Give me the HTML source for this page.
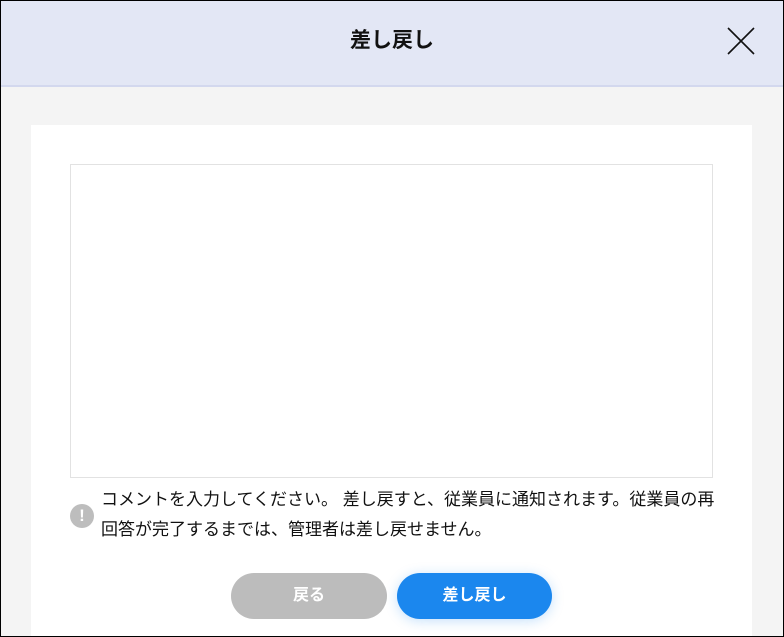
<!DOCTYPE html>
<html><head><meta charset="utf-8"><style>
*{margin:0;padding:0;box-sizing:border-box}
html,body{width:784px;height:637px;overflow:hidden}
body{font-family:"Liberation Sans","Noto Sans CJK JP",sans-serif;background:#f4f4f4;position:relative}
.frame{position:absolute;left:0;top:0;width:784px;height:637px;border:1px solid #000;pointer-events:none;z-index:5}
.hdr{position:absolute;left:0;top:0;width:784px;height:87px;background:#e3e7f5;border-bottom:2px solid #d3d8ee}
.hdr h1{position:absolute;left:0;right:0;top:26px;text-align:center;font-size:21px;font-weight:bold;color:#111;line-height:30px}
.card{position:absolute;left:31px;top:125px;width:721px;height:512px;background:#fff}
.ta{position:absolute;left:39px;top:39px;width:643px;height:314px;border:1px solid #e2e2e2}
.ic{position:absolute;left:39px;top:379px;width:24px;height:24px;border-radius:50%;background:#bdbdbd;color:#fff;font-weight:bold;font-size:17px;text-align:center;line-height:24px}
.note{position:absolute;left:70px;top:360px;width:618px;font-size:17px;line-height:30px;color:#111}
.btn{position:absolute;top:448px;height:46px;border-radius:23px;color:#fff;font-size:16px;font-weight:bold;text-align:center;line-height:46px}
.b1{left:200px;width:156px;background:#bcbcbc}
.b2{left:366px;width:155px;background:#1b87ee;box-shadow:0 2px 12px rgba(27,135,238,.25)}
</style></head><body>
<div class="hdr"><h1>差し戻し</h1>
<svg style="position:absolute;left:727px;top:27px" width="28" height="28" viewBox="0 0 28 28"><path d="M1 1L27 27M27 1L1 27" stroke="#111" stroke-width="1.6"/></svg></div>
<div class="card">
<div class="ta"></div>
<div class="ic">!</div>
<div class="note">コメントを入力してください。 差し戻すと、従業員に通知されます。従業員の再回答が完了するまでは、管理者は差し戻せません。</div>
<div class="btn b1">戻る</div>
<div class="btn b2">差し戻し</div>
</div>
<div class="frame"></div>
</body></html>
